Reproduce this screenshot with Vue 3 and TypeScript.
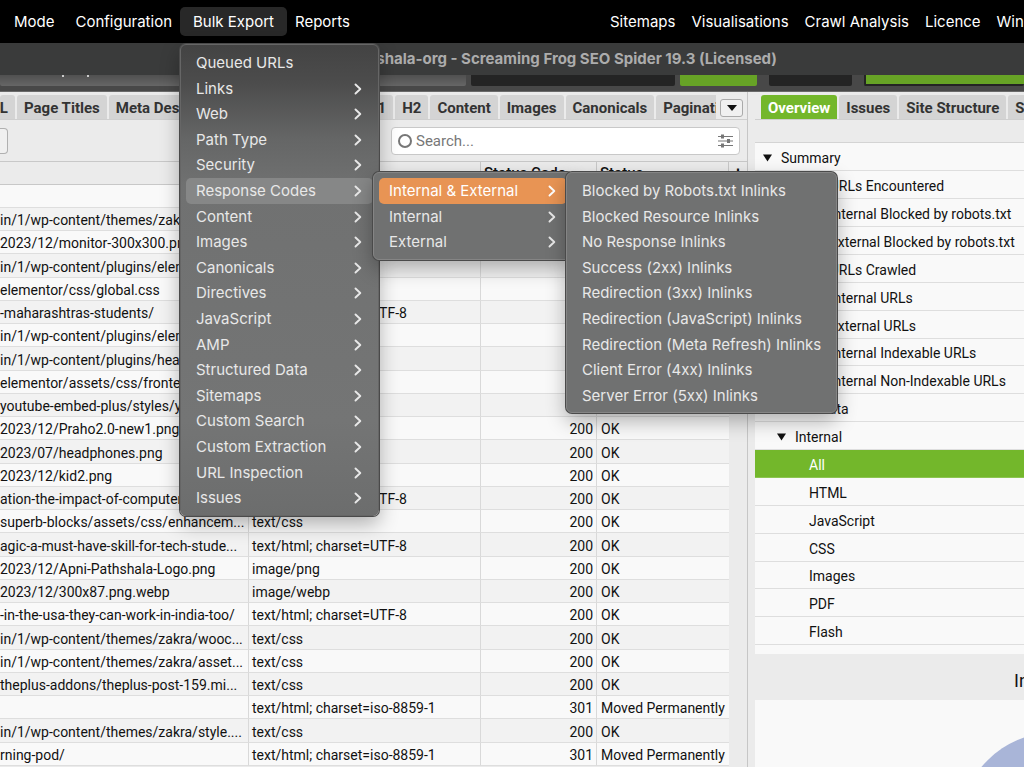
<script setup lang="ts">
interface MenuEntry {
  label: string
  sub?: boolean
  state?: 'open' | 'active'
}
interface CrawlRow {
  url: string
  type: string
  code: string
  status: string
}
interface TreeRow {
  label: string
  level: number
  expandable?: boolean
  selected?: boolean
}

const leftMenus = ['Mode', 'Configuration', 'Bulk Export', 'Reports']
const rightMenus = ['Sitemaps', 'Visualisations', 'Crawl Analysis', 'Licence', 'Window']

const bulkExport: MenuEntry[] = [
  { label: 'Queued URLs' },
  { label: 'Links', sub: true },
  { label: 'Web', sub: true },
  { label: 'Path Type', sub: true },
  { label: 'Security', sub: true },
  { label: 'Response Codes', sub: true, state: 'open' },
  { label: 'Content', sub: true },
  { label: 'Images', sub: true },
  { label: 'Canonicals', sub: true },
  { label: 'Directives', sub: true },
  { label: 'JavaScript', sub: true },
  { label: 'AMP', sub: true },
  { label: 'Structured Data', sub: true },
  { label: 'Sitemaps', sub: true },
  { label: 'Custom Search', sub: true },
  { label: 'Custom Extraction', sub: true },
  { label: 'URL Inspection', sub: true },
  { label: 'Issues', sub: true },
]
const responseCodes: MenuEntry[] = [
  { label: 'Internal & External', sub: true, state: 'active' },
  { label: 'Internal', sub: true },
  { label: 'External', sub: true },
]
const inlinks: MenuEntry[] = [
  { label: 'Blocked by Robots.txt Inlinks' },
  { label: 'Blocked Resource Inlinks' },
  { label: 'No Response Inlinks' },
  { label: 'Success (2xx) Inlinks' },
  { label: 'Redirection (3xx) Inlinks' },
  { label: 'Redirection (JavaScript) Inlinks' },
  { label: 'Redirection (Meta Refresh) Inlinks' },
  { label: 'Client Error (4xx) Inlinks' },
  { label: 'Server Error (5xx) Inlinks' },
]
const menus = [
  { name: 'bulk', title: 'Bulk Export', entries: bulkExport },
  { name: 'codes', title: 'Response Codes', entries: responseCodes },
  { name: 'inlinks', title: 'Internal & External', entries: inlinks },
]

const mainTabs = ['URL', 'Page Titles', 'Meta Description', 'Meta Keywords', 'H1', 'H2', 'Content', 'Images', 'Canonicals', 'Pagination']
const sideTabs = ['Overview', 'Issues', 'Site Structure', 'Segments']

const html = 'text/html; charset=UTF-8'
const iso = 'text/html; charset=iso-8859-1'
const row = (url: string, type: string, code = '200', status = 'OK'): CrawlRow => ({ url, type, code, status })
const rows: CrawlRow[] = [
  row('', ''),
  row('in/1/wp-content/themes/zakra/asset...', 'text/css'),
  row('2023/12/monitor-300x300.png', 'image/png'),
  row('in/1/wp-content/plugins/elementor...', 'text/css'),
  row('elementor/css/global.css', 'text/css'),
  row('-maharashtras-students/', html),
  row('in/1/wp-content/plugins/elementor...', 'text/css'),
  row('in/1/wp-content/plugins/header-foo...', 'text/css'),
  row('elementor/assets/css/frontend.min...', 'text/css'),
  row('youtube-embed-plus/styles/ytprefs...', 'text/css'),
  row('2023/12/Praho2.0-new1.png', 'image/png'),
  row('2023/07/headphones.png', 'image/png'),
  row('2023/12/kid2.png', 'image/png'),
  row('ation-the-impact-of-computer-scien...', html),
  row('superb-blocks/assets/css/enhancem...', 'text/css'),
  row('agic-a-must-have-skill-for-tech-stude...', html),
  row('2023/12/Apni-Pathshala-Logo.png', 'image/png'),
  row('2023/12/300x87.png.webp', 'image/webp'),
  row('-in-the-usa-they-can-work-in-india-too/', html),
  row('in/1/wp-content/themes/zakra/wooc...', 'text/css'),
  row('in/1/wp-content/themes/zakra/asset...', 'text/css'),
  row('theplus-addons/theplus-post-159.mi...', 'text/css'),
  row('', iso, '301', 'Moved Permanently'),
  row('in/1/wp-content/themes/zakra/style....', 'text/css'),
  row('rning-pod/', iso, '301', 'Moved Permanently'),
]

const tree: TreeRow[] = [
  { label: 'Summary', level: 0, expandable: true },
  { label: 'Total URLs Encountered', level: 1 },
  { label: 'Total Internal Blocked by robots.txt', level: 1 },
  { label: 'Total External Blocked by robots.txt', level: 1 },
  { label: 'Total URLs Crawled', level: 1 },
  { label: 'Total Internal URLs', level: 1 },
  { label: 'Total External URLs', level: 1 },
  { label: 'Total Internal Indexable URLs', level: 1 },
  { label: 'Total Internal Non-Indexable URLs', level: 1 },
  { label: 'Crawl Data', level: 0, expandable: true },
  { label: 'Internal', level: 1, expandable: true },
  { label: 'All', level: 2, selected: true },
  { label: 'HTML', level: 2 },
  { label: 'JavaScript', level: 2 },
  { label: 'CSS', level: 2 },
  { label: 'Images', level: 2 },
  { label: 'PDF', level: 2 },
  { label: 'Flash', level: 2 },
]
</script>

<template>
  <div class="desktop">
    <nav class="menubar" aria-label="Application menu">
      <div class="bar-group left">
        <button v-for="m in leftMenus" :key="m" type="button" :class="{ pressed: m === 'Bulk Export' }">{{ m }}</button>
      </div>
      <div class="bar-group right">
        <button v-for="m in rightMenus" :key="m" type="button">{{ m }}</button>
      </div>
    </nav>

    <header class="titlebar">apnipathshala-org - Screaming Frog SEO Spider 19.3 (Licensed)</header>

    <div class="toolbar">
      <div class="tool address"><i></i><i></i></div>
      <div class="tool dark mode"></div>
      <div class="tool green"></div>
      <div class="tool dark clear"></div>
      <div class="tool progress"></div>
    </div>

    <main class="workspace">
      <section class="main-pane">
        <div class="tabs">
          <div class="tab-strip" role="tablist">
            <button v-for="t in mainTabs" :key="t" type="button" role="tab">{{ t }}</button>
          </div>
          <button class="more" type="button" aria-label="More tabs">
            <svg width="10" height="6" viewBox="0 0 10 6"><path d="M0 0H10L5 6Z" fill="#111" /></svg>
          </button>
        </div>
        <div class="filter-row">
          <button class="export" type="button" aria-label="Export"></button>
          <label class="search">
            <svg width="16" height="16" viewBox="0 0 16 16"><circle cx="8" cy="8" r="6" fill="none" stroke="#777" stroke-width="2" /></svg>
            <input type="text" placeholder="Search..." aria-label="Search" />
            <svg width="16" height="14" viewBox="0 0 16 14" stroke="#777" fill="#777">
              <path d="M0 2.5H15M0 7H15M0 11.5H15" stroke-width="1.2" />
              <path d="M3 .5h3v4h-3zM9 5h3v4h-3zM3 9.500h3v4h-3z" stroke="none" />
            </svg>
          </label>
        </div>
        <table>
          <colgroup><col class="c-url" /><col class="c-type" /><col class="c-code" /><col /><col class="c-end" /></colgroup>
          <thead>
            <tr><th aria-label="Address"></th><th aria-label="Content Type"></th><th>Status Code</th><th>Status</th><th class="plus">+</th></tr>
          </thead>
          <tbody>
            <tr v-for="(r, i) in rows" :key="i">
              <td class="url">{{ r.url }}</td>
              <td>{{ r.type }}</td>
              <td class="code">{{ r.code }}</td>
              <td class="status">{{ r.status }}</td>
              <td class="lane"></td>
            </tr>
          </tbody>
        </table>
      </section>

      <aside class="side-pane">
        <div class="tabs">
          <div class="tab-strip" role="tablist">
            <button v-for="t in sideTabs" :key="t" type="button" role="tab" :class="{ current: t === 'Overview' }">{{ t }}</button>
          </div>
        </div>
        <div class="tree-head"></div>
        <ul class="tree">
          <li v-for="t in tree" :key="t.label">
            <button type="button" :class="['level-' + t.level, { selected: t.selected }]">
              <span class="twist"><svg v-if="t.expandable" width="9" height="8" viewBox="0 0 9 8"><path d="M0 0.500H9L4.500 7.500Z" fill="#111" /></svg></span>{{ t.label }}
            </button>
          </li>
        </ul>
        <div class="tree-tail"></div>
        <h2>Internal</h2>
        <div class="chart">
          <svg viewBox="0 0 269 67" width="269" height="67"><circle cx="301" cy="129" r="97" fill="#a9b5d8" /></svg>
        </div>
      </aside>
    </main>

    <ul v-for="m in menus" :key="m.name" :class="['menu', m.name]" :aria-label="m.title">
      <li v-for="e in m.entries" :key="e.label">
        <button type="button" :class="e.state">
          <span>{{ e.label }}</span>
          <svg v-if="e.sub" width="8" height="12" viewBox="0 0 8 12"><path d="M1.500 1.500L6.300 6L1.500 10.500" fill="none" stroke="currentColor" stroke-width="1.900" stroke-linecap="round" stroke-linejoin="round" /></svg>
        </button>
      </li>
    </ul>
  </div>
</template>

<style>
body {
  margin: 0;
  overflow: hidden;
}
</style>

<style scoped>
.desktop {
  position: relative;
  display: flex;
  flex-direction: column;
  height: 100vh;
  overflow: hidden;
  background: #ebebeb;
  color: #111;
  font: 14px/20px Roboto, "Liberation Sans", sans-serif;
}
* {
  box-sizing: border-box;
}
button {
  border: 0;
  margin: 0;
  padding: 0;
  background: none;
  color: inherit;
  font: inherit;
  white-space: nowrap;
}
ul {
  list-style: none;
  margin: 0;
  padding: 0;
}

/* Menu bar */
.menubar {
  flex: none;
  height: 43px;
  display: flex;
  align-items: center;
  background: #000;
  color: #fff;
  font: 400 15px/20px Inter, "Liberation Sans", sans-serif;
}
.bar-group {
  display: flex;
  align-items: center;
}
.left {
  flex: 0 0 602px;
}
.left button {
  padding: 0 8px 0 13px;
}
.left button:first-child {
  padding-left: 14px;
}
.left .pressed {
  height: 29px;
  padding: 0 13px;
  border-radius: 5px;
  background: #282828;
}
.left .pressed + button {
  padding-left: 8px;
}
.right button {
  padding: 0 8px;
}

.titlebar {
  flex: none;
  height: 32px;
  padding-right: 247px;
  background: #3a3b3b;
  color: #acacac;
  text-align: right;
  white-space: nowrap;
  font: 700 15px/32px Inter, "Liberation Sans", sans-serif;
}

/* Lower edge of the toolbar */
.toolbar {
  flex: none;
  display: flex;
  height: 17px;
  background: #484848;
  border-bottom: 1px solid #6a6a6a;
}
.tool {
  height: 11px;
  margin-right: 5px;
  border-radius: 0 0 2px 2px;
}
.address {
  flex: 0 0 466px;
  display: flex;
  gap: 23px;
  padding-left: 62px;
  background: linear-gradient(#505050, #666);
}
.address i {
  width: 2px;
  height: 2px;
  background: #ccc;
}
.dark {
  background: #242424;
}
.mode {
  flex: 0 0 204px;
}
.green {
  flex: 0 0 77px;
  margin-right: 12px;
  background: #67a326;
}
.clear {
  flex: 0 0 83px;
  margin-right: 12px;
}
.progress {
  flex: 1;
  margin-right: 0;
  border: solid #242424;
  border-width: 0 0 2px 2px;
  background: #67a326;
}

.workspace {
  flex: 1;
  min-height: 0;
  display: grid;
  grid-template-columns: minmax(0, 1fr) 269px;
  column-gap: 7px;
}
.main-pane,
.side-pane {
  min-width: 0;
  overflow: hidden;
}
.main-pane {
  border-right: 1px solid #c6c6c6;
}

/* Tabs */
.tabs {
  display: flex;
  align-items: flex-end;
  height: 28px;
  border-bottom: 1px solid #cfcfcf;
  background: #ebebeb;
}
.tab-strip {
  flex: 1;
  min-width: 0;
  display: flex;
  gap: 2px;
  overflow: hidden;
}
.tab-strip button {
  flex: none;
  height: 24px;
  padding: 2px 7px 0;
  border-radius: 3px 3px 0 0;
  background: #d4d4d4;
  color: #333;
  font-weight: 700;
  font-size: 15px;
}
.main-pane .tab-strip {
  flex: 0 0 716px;
}
.main-pane .tab-strip button:first-child {
  width: 15px;
  padding: 2px 7px 0 0;
  display: flex;
  align-items: center;
  justify-content: flex-end;
}
.side-pane .tabs {
  padding-left: 6px;
}
.tab-strip .current {
  background: #73b72b;
  color: #fff;
}
.more {
  display: flex;
  align-items: center;
  justify-content: center;
  width: 23px;
  height: 18px;
  margin: 0 0 2px 4px;
  border: 1px solid #aaa;
  border-radius: 3px;
  background: #f0f0f0;
}

.filter-row {
  display: flex;
  align-items: center;
  justify-content: space-between;
  height: 41px;
  padding-right: 7px;
}
.export {
  width: 8px;
  height: 26px;
  border: 1px solid #b0b0b0;
  border-left: 0;
  border-radius: 0 4px 4px 0;
  background: #f0f0f0;
}
.search {
  display: flex;
  align-items: center;
  gap: 3px;
  width: 349px;
  height: 28px;
  padding: 0 5px;
  border: 1px solid #c8c8c8;
  border-radius: 4px;
  background: #fff;
}
.search input {
  flex: 1;
  min-width: 0;
  padding: 0;
  border: 0;
  outline: 0;
  background: none;
  color: #333;
  font: 15px/20px Roboto, "Liberation Sans", sans-serif;
}
.search input::placeholder {
  color: #777;
  opacity: 1;
}

/* Crawl table */
table {
  width: 100%;
  table-layout: fixed;
  border-collapse: separate;
  border-spacing: 0;
}
.c-url {
  width: 249px;
}
.c-type {
  width: 232px;
}
.c-code {
  width: 116px;
}
.c-end {
  width: 18px;
}
th,
td {
  height: 23px;
  padding: 2px 3px 0;
  border-right: 1px solid #d9d9d9;
  border-bottom: 1px solid #dedede;
  overflow: hidden;
  white-space: nowrap;
  text-align: left;
  line-height: 20px;
}
th {
  height: 24px;
  padding-top: 0;
  border-top: 1px solid #c8c8c8;
  border-color: #c8c8c8;
  font-weight: 500;
  font-size: 15px;
}
th.plus {
  padding: 0;
  border-right: 0;
  text-align: center;
  font-size: 18px;
}
tbody tr {
  background: #f9f9f9;
}
tbody tr:nth-child(even) {
  background: #f2f2f2;
}
tbody tr:nth-child(4n) td {
  height: 24px;
}
td.url {
  padding: 2px 0 0;
}
td.code {
  text-align: right;
}
td.status {
  padding-left: 4px;
  border-right: 0;
}
td.lane {
  border: 0;
  background: #ebebeb;
}

/* Overview tree */
.tree-head {
  height: 23px;
  border-bottom: 1px solid #d4d4d4;
}
.tree button {
  display: flex;
  align-items: center;
  width: 100%;
  height: 28px;
  padding-top: 2px;
  border-bottom: 1px solid #dedede;
  background: #f9f9f9;
}
.tree li:nth-child(8n) button {
  height: 27px;
}
.twist {
  display: flex;
  width: 18px;
}
.tree .level-0 {
  padding-left: 8px;
}
.tree .level-1 {
  padding-left: 22px;
}
.tree .level-2 {
  padding-left: 36px;
}
.tree .selected {
  background: #73b72b;
  border-color: #8cc551;
  color: #fff;
}
.tree-tail {
  height: 9px;
  background: #f9f9f9;
}
h2 {
  height: 46px;
  margin: 0;
  padding: 4px 0 0 259px;
  font-weight: 400;
  font-size: 18px;
  line-height: 46px;
  white-space: nowrap;
}
.chart {
  height: 100%;
  background: #f9f9f9;
}
.chart svg {
  display: block;
}

/* Floating menus */
.menu {
  position: absolute;
  padding: 5px 5px 4px;
  border: 1px solid #858585;
  border-radius: 6px;
  background: #707171;
  box-shadow: 0 0 0 1px #4a4a4a, 0 8px 20px rgba(0, 0, 0, 0.3);
  color: #e8e8e8;
  font: 400 15px/20px Inter, "Liberation Sans", sans-serif;
}
.menu button {
  display: flex;
  align-items: center;
  justify-content: space-between;
  width: 100%;
  height: 26px;
  padding: 0 11px 0 10px;
  border-radius: 5px;
}
.menu li:nth-child(5n + 2) button,
.menu li:nth-child(5n + 4) button {
  height: 25px;
}
.menu .open {
  background: #868787;
}
.menu .active {
  background: #e89454;
  color: #fff;
}
.bulk {
  left: 180px;
  top: 44px;
  width: 199px;
  border-color: #666;
  background: linear-gradient(#434343, #4c4c4c 8%, #656666 20%, #707171 30%, #747575 80%, #6c6d6d);
}
.codes {
  left: 373px;
  top: 172px;
  width: 200px;
}
.inlinks {
  left: 566px;
  top: 172px;
  width: 271px;
}
</style>
